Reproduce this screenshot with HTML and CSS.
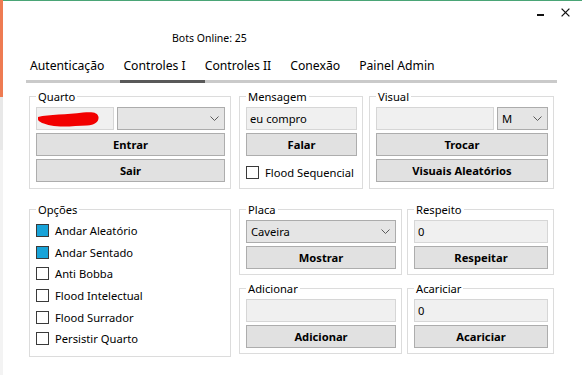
FILE: index.html
```html
<!DOCTYPE html>
<html lang="pt">
<head>
<meta charset="utf-8">
<title>Controles I</title>
<link rel="stylesheet" href="styles.css">
</head>
<body>
<div class="desk"></div>
<div class="window">
  <header class="titlebar">
    <span class="tb-min"></span>
    <svg class="tb-close" viewBox="0 0 9 9" width="9" height="9"><path d="M0.6 0.6L8.4 8.4M8.4 0.6L0.6 8.4" stroke="#111" stroke-width="1.3" fill="none"/></svg>
  </header>
  <div class="status">Bots Online: 25</div>
  <nav class="tabs">
    <span class="tab">Autenticação</span>
    <span class="tab active">Controles I</span>
    <span class="tab">Controles II</span>
    <span class="tab">Conexão</span>
    <span class="tab">Painel Admin</span>
  </nav>
  <main class="panel">
    <div class="row row-top">
      <fieldset class="group g-quarto">
        <legend>Quarto</legend>
        <div class="gbody">
          <div class="line">
            <div class="textbox tb-quarto">
              <svg class="scribble" viewBox="0 0 63 16" width="63" height="16"><path d="M1,6 C12,3 30,4 46,1.5 C56,0.5 61,1.5 61.5,6 C62,11 58,14 50,14.5 C38,15 24,16.5 14,14.5 C7,13 1.5,11 1,8.5 Z" fill="#f20000"/></svg>
            </div>
            <div class="combo grow"><span></span><svg class="chev" viewBox="0 0 9 5" width="9" height="5"><polyline points="0.5,0.5 4.5,4.5 8.5,0.5" fill="none" stroke="#5a5a5a" stroke-width="1"/></svg></div>
          </div>
          <button class="btn">Entrar</button>
          <button class="btn">Sair</button>
        </div>
      </fieldset>
      <fieldset class="group g-msg">
        <legend>Mensagem</legend>
        <div class="gbody">
          <div class="textbox">eu compro</div>
          <button class="btn">Falar</button>
          <label class="check check-msg"><span class="cb"></span>Flood Sequencial</label>
        </div>
      </fieldset>
      <fieldset class="group g-visual">
        <legend>Visual</legend>
        <div class="gbody">
          <div class="line">
            <div class="textbox grow"></div>
            <div class="combo c-small"><span>M</span><svg class="chev" viewBox="0 0 9 5" width="9" height="5"><polyline points="0.5,0.5 4.5,4.5 8.5,0.5" fill="none" stroke="#5a5a5a" stroke-width="1"/></svg></div>
          </div>
          <button class="btn">Trocar</button>
          <button class="btn">Visuais Aleatórios</button>
        </div>
      </fieldset>
    </div>
    <div class="row row-bottom">
      <fieldset class="group g-opcoes">
        <legend>Opções</legend>
        <div class="checks">
          <label class="check"><span class="cb on"></span>Andar Aleatório</label>
          <label class="check"><span class="cb on"></span>Andar Sentado</label>
          <label class="check"><span class="cb"></span>Anti Bobba</label>
          <label class="check"><span class="cb"></span>Flood Intelectual</label>
          <label class="check"><span class="cb"></span>Flood Surrador</label>
          <label class="check"><span class="cb"></span>Persistir Quarto</label>
        </div>
      </fieldset>
      <div class="col col-mid">
        <fieldset class="group g-small">
          <legend>Placa</legend>
          <div class="gbody">
            <div class="combo"><span>Caveira</span><svg class="chev" viewBox="0 0 9 5" width="9" height="5"><polyline points="0.5,0.5 4.5,4.5 8.5,0.5" fill="none" stroke="#5a5a5a" stroke-width="1"/></svg></div>
            <button class="btn">Mostrar</button>
          </div>
        </fieldset>
        <fieldset class="group g-small">
          <legend>Adicionar</legend>
          <div class="gbody">
            <div class="textbox"></div>
            <button class="btn">Adicionar</button>
          </div>
        </fieldset>
      </div>
      <div class="col col-right">
        <fieldset class="group g-small">
          <legend>Respeito</legend>
          <div class="gbody">
            <div class="textbox">0</div>
            <button class="btn">Respeitar</button>
          </div>
        </fieldset>
        <fieldset class="group g-small">
          <legend>Acariciar</legend>
          <div class="gbody">
            <div class="textbox">0</div>
            <button class="btn">Acariciar</button>
          </div>
        </fieldset>
      </div>
    </div>
  </main>
</div>
</body>
</html>
```

FILE: styles.css
```css
* { box-sizing: border-box; }
html, body { margin: 0; }
body {
  display: flex;
  width: 582px;
  height: 375px;
  overflow: hidden;
  background: #fff;
  font-family: "Noto Sans", "Open Sans", sans-serif;
  font-size: 11.2px;
  color: #000;
}
.desk {
  flex: none;
  width: 3px;
  background: linear-gradient(to bottom, #ee7b52 0, #ee7b52 97px, #e8e8e8 97px, #e8e8e8 150px, #f3f3f3 150px);
}
.window {
  flex: 1;
  min-width: 0;
  border-top: 1px solid #4aa576;
  display: flex;
  flex-direction: column;
  background: #fff;
}
.titlebar {
  height: 29px;
  display: flex;
  justify-content: flex-end;
  align-items: flex-start;
  gap: 17px;
  padding: 7px 12px 0 0;
}
.tb-min { width: 7px; height: 2px; background: #111; margin-top: 6px; }
.tb-close { display: block; }
.status {
  height: 16px;
  line-height: 16px;
  padding-left: 169px;
  font-size: 10.5px;
}
.tabs {
  display: flex;
  margin: 11px 25px 0 23px;
  padding-left: 4px;
  border-bottom: 3px solid #cacaca;
}
.tab {
  position: relative;
  padding: 0 19px 5px 0;
  line-height: 18px;
  font-size: 12.2px;
}
.tab.active::after {
  content: "";
  position: absolute;
  left: -3px;
  right: 0;
  bottom: -3px;
  height: 3px;
  background: #595959;
}
.panel {
  display: flex;
  flex-direction: column;
  gap: 12px;
  padding: 5px 0 0 26px;
}
.row { display: flex; align-items: stretch; }
.group {
  margin: 0;
  min-width: 0;
  border: 1px solid #dcdcdc;
  padding: 2px 5px 6px 6px;
}
.group legend {
  padding: 0 2px;
  line-height: 17px;
  font-size: 11.2px;
}
.g-quarto { width: 202px; }
.g-msg { width: 124px; margin-left: 8px; }
.g-visual { width: 185px; margin-left: 6px; }
.g-opcoes { width: 202px; }
.col { display: flex; flex-direction: column; gap: 5px; }
.col-mid { width: 163px; margin-left: 8px; }
.col-right { width: 147px; margin-left: 5px; }
.g-small { padding-bottom: 5px; }
.gbody { display: flex; flex-direction: column; gap: 3px; }
.line { display: flex; gap: 3px; }
.grow { flex: 1; min-width: 0; }
.textbox {
  height: 23px;
  background: #f0f0f0;
  border: 1px solid #d6d6d6;
  padding: 0 3px;
  display: flex;
  align-items: center;
  white-space: nowrap;
}
.tb-quarto { width: 78px; padding: 0; }
.scribble { display: block; }
.combo {
  height: 23px;
  background: #e5e5e5;
  border: 1px solid #acacac;
  display: flex;
  align-items: center;
  justify-content: space-between;
  padding: 0 5px 0 4px;
}
.c-small { width: 51px; }
.chev { display: block; }
.btn {
  height: 23px;
  margin: 0;
  padding: 0;
  background: #e1e1e1;
  border: 1px solid #adadad;
  border-radius: 0;
  font-family: inherit;
  font-size: 11.2px;
  font-weight: 700;
  color: #000;
}
.checks { display: flex; flex-direction: column; }
.check {
  display: flex;
  align-items: center;
  gap: 6px;
  height: 21.6px;
  white-space: nowrap;
}
.check-msg { height: 23px; padding-top: 3px; }
.cb {
  flex: none;
  width: 13px;
  height: 13px;
  border: 1px solid #3a3a3a;
  background: #fff;
}
.cb.on { background: #18a3d8; }
```
